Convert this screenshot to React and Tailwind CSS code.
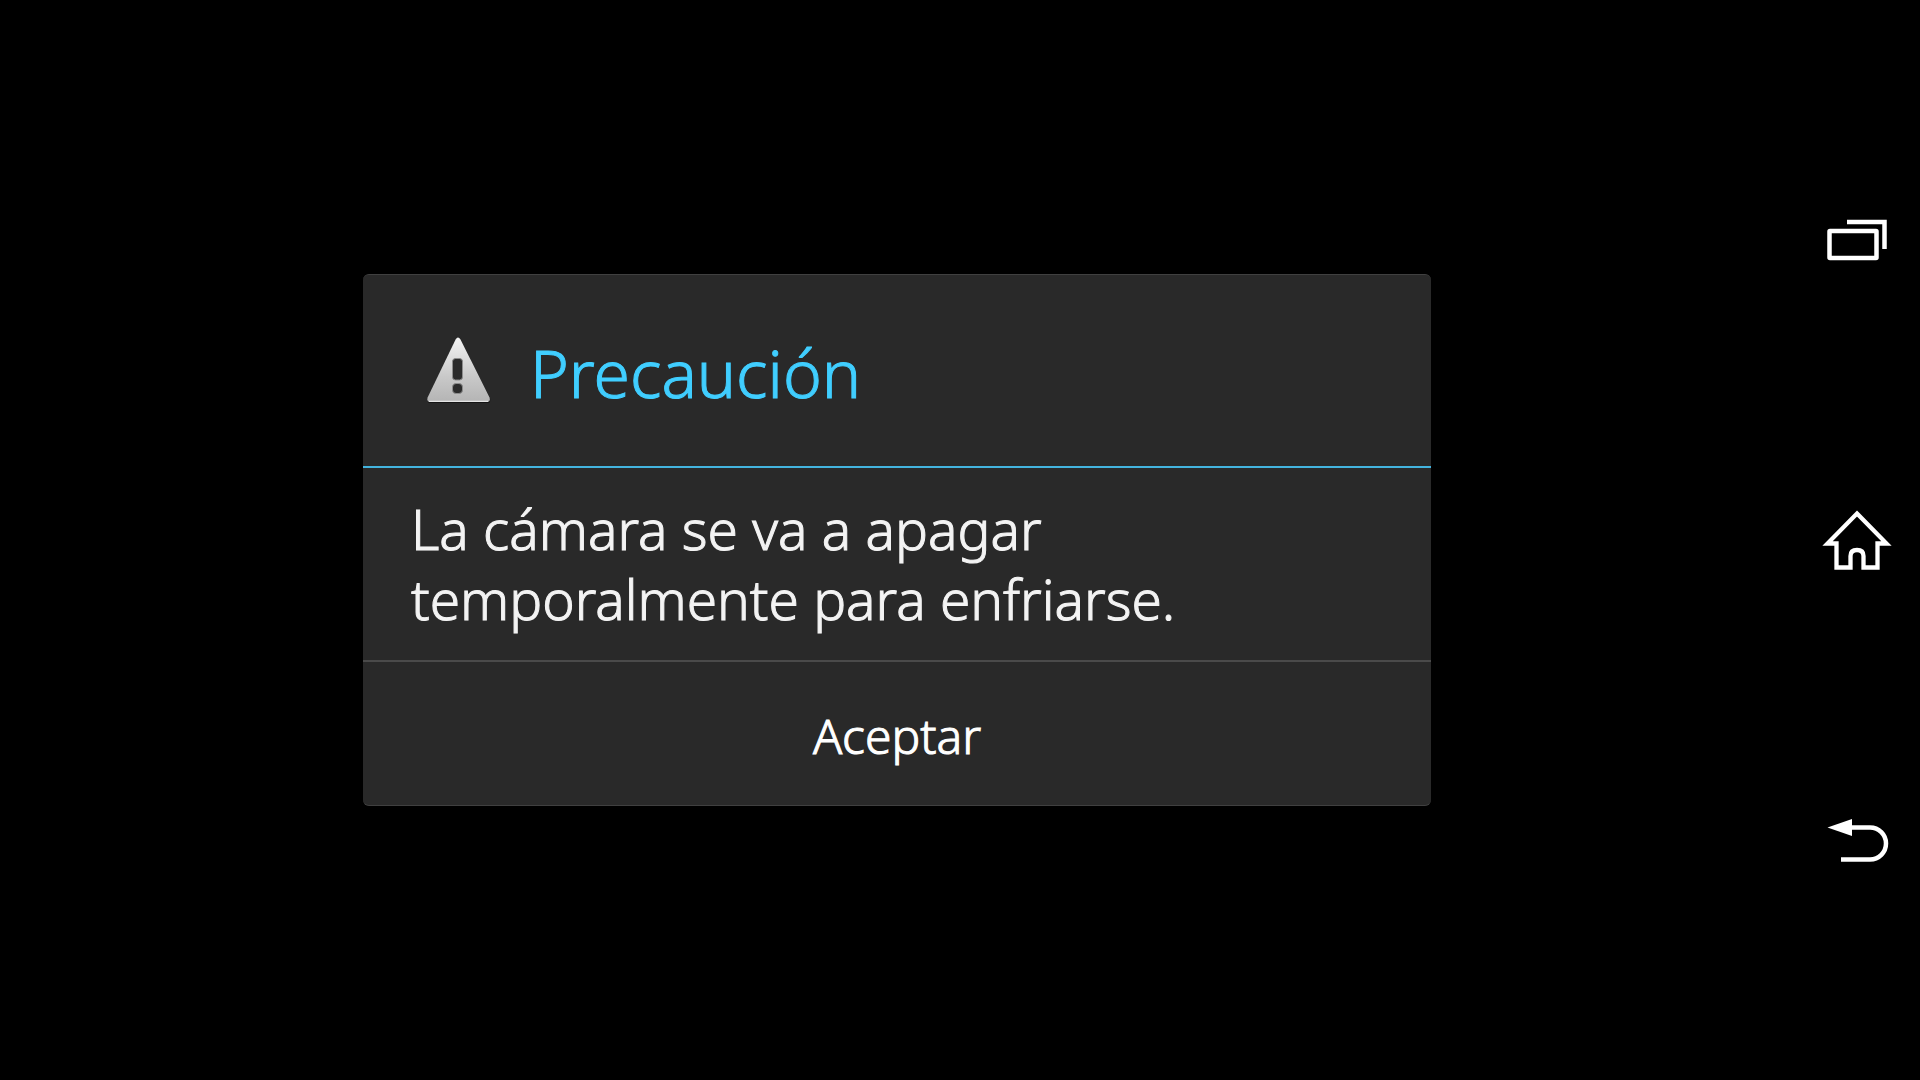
function WarningIcon() {
  return (
    <svg width="70" height="70" viewBox="0 0 70 70" aria-hidden="true">
      <defs>
        <linearGradient id="metal" x1="0" y1="0" x2="0" y2="1">
          <stop offset="0" stopColor="#f4f4f4" />
          <stop offset="0.6" stopColor="#c9c9c9" />
          <stop offset="1" stopColor="#b4b4b4" />
        </linearGradient>
      </defs>
      <path
        d="M32 3.500 Q34 0.500 36.500 3.500 L66 61 Q67 66 64 66 L6 66 Q2.500 66 4 61 Z"
        fill="#141414"
      />
      <path
        d="M31.600 2.500 Q34 -1.500 36.500 2.500 L65.600 60.500 Q66.500 65 63.500 65 L5.500 65 Q2.500 65 3.600 60.500 Z"
        fill="url(#metal)"
      />
      <path d="M5 64.300 H64" stroke="#e4e4e4" strokeWidth="1.200" />
      <rect x="28.500" y="21.500" width="10" height="21.500" rx="3" fill="#2b2b2b" stroke="#8c8c8c" strokeWidth="1" />
      <rect x="28.500" y="46.500" width="10" height="10" rx="3.500" fill="#2b2b2b" stroke="#8c8c8c" strokeWidth="1" />
    </svg>
  );
}

function RecentsIcon() {
  return (
    <svg width="72" height="72" viewBox="0 0 72 72" fill="none" stroke="#fff" strokeWidth="4.500" aria-hidden="true">
      <rect x="8.500" y="26" width="47" height="27" rx="0.500" />
      <path d="M26 17 H63.500 V44" />
    </svg>
  );
}

function HomeIcon() {
  return (
    <svg width="72" height="72" viewBox="0 0 72 72" fill="none" stroke="#fff" strokeWidth="4.300" aria-hidden="true">
      <path d="M36 8.500 L65.500 38.500 H56.500 V62.500 H42.500 V51 Q42.500 45 36 45 Q29.500 45 29.500 51 V62.500 H15.500 V38.500 H6.500 Z" />
    </svg>
  );
}

function BackIcon() {
  return (
    <svg width="72" height="72" viewBox="0 0 72 72" fill="none" aria-hidden="true">
      <path d="M28 22.500 H49 A16 16 0 0 1 49 54.500 H20" stroke="#fff" strokeWidth="4.500" />
      <path d="M6.500 22.500 L31 14 V31 Z" fill="#fff" />
    </svg>
  );
}

const navItems = [
  { label: "Aplicaciones recientes", Icon: RecentsIcon },
  { label: "Inicio", Icon: HomeIcon },
  { label: "Atrás", Icon: BackIcon },
];

export default function App() {
  return (
    <div className="flex min-h-screen bg-black font-['Noto_Sans',sans-serif] font-light [-webkit-text-stroke:1px_currentColor]">
      <main className="flex flex-1 items-center justify-center px-6">
        <section
          role="alertdialog"
          aria-labelledby="dialog-title"
          aria-describedby="dialog-message"
          className="w-full max-w-[1068px] overflow-hidden rounded-md border-y border-[#404040] bg-[#292929]"
        >
          <header className="flex items-center gap-9 border-b-2 border-[#43b4de] px-[61px] pt-[49px] pb-[46px]">
            <WarningIcon />
            <h1 id="dialog-title" className="text-[66px] leading-24 text-[#40ceff]">
              Precaución
            </h1>
          </header>
          <p id="dialog-message" className="px-12 py-[26px] text-[55px] leading-[70px] text-[#f3f3f3]">
            La cámara se va a apagar temporalmente para enfriarse.
          </p>
          <button type="button" className="block h-[145px] w-full border-t-2 border-[#4a4a4a] pt-1 text-5xl text-white">
            Aceptar
          </button>
        </section>
      </main>
      <nav aria-label="Navegación" className="flex w-[126px] flex-col items-center justify-center pt-0.5">
        {navItems.map(({ label, Icon }) => (
          <button key={label} type="button" aria-label={label} className="flex h-75 w-full items-center justify-center">
            <Icon />
          </button>
        ))}
      </nav>
    </div>
  );
}
